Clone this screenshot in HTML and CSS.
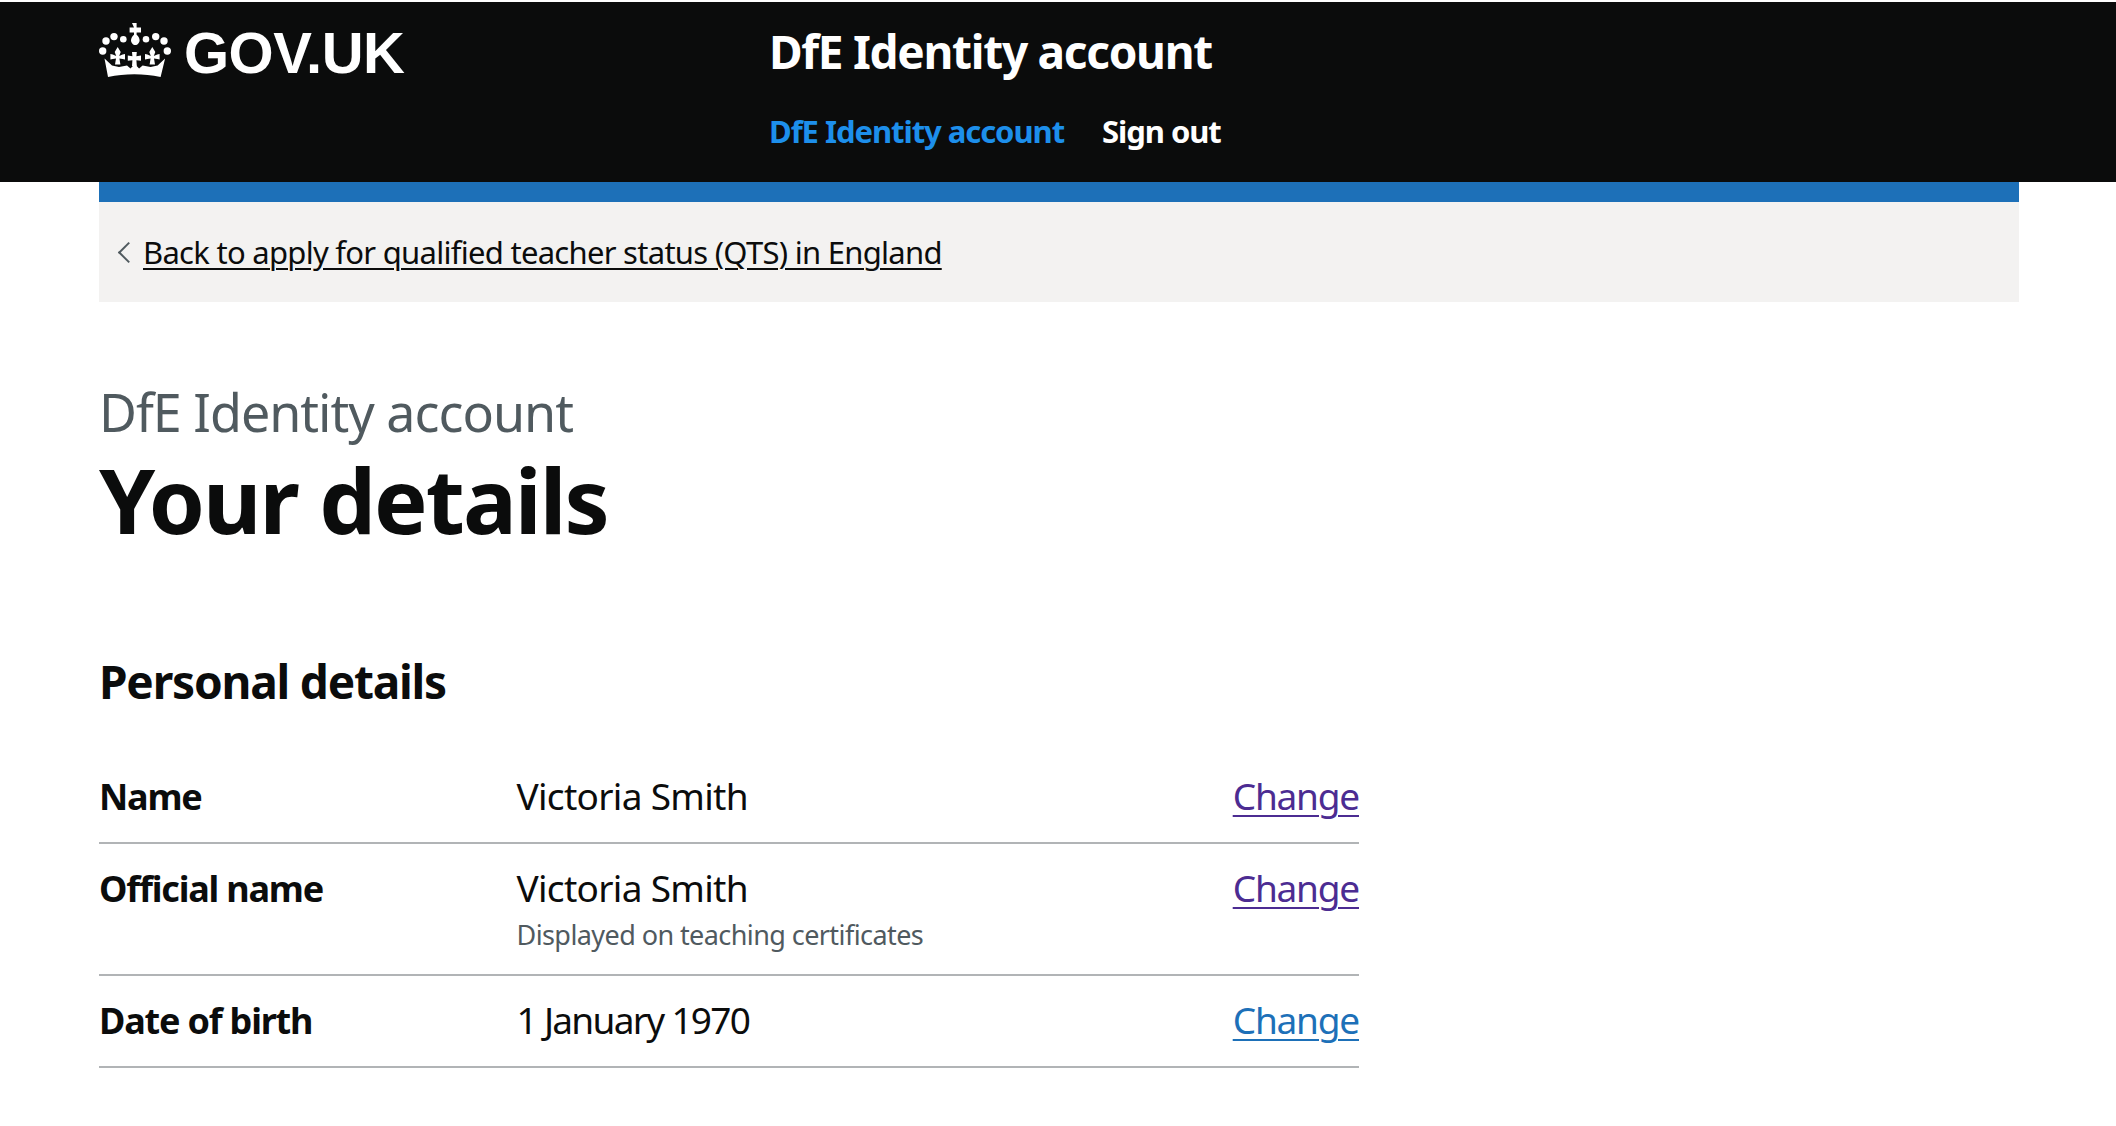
FILE: index.html

```html
<!DOCTYPE html>
<html lang="en">
<head>
    <meta charset="utf-8">
    <title>Your details - DfE Identity account</title>
    <link rel="stylesheet" href="styles.css">
</head>
<body>
    <header class="header">
        <div class="header-inner">
            <a class="logo" href="#">
                <svg class="crown" viewBox="0 0 72 54" aria-hidden="true">
                    <!-- top cross and orb -->
                    <path d="M33 0h4.600v4.600h4.400v4.800h-4.400v2.400c2 1.600 3 3.800 3 5.600 0 2-2 4.600-4.300 4.600s-4.300-2.600-4.300-4.600c0-1.800 1-4 3-5.600v-2.400h-4.400v-4.800h4.400z"/>
                    <circle cx="7" cy="18" r="3.700"/>
                    <circle cx="15" cy="13.600" r="3.700"/>
                    <circle cx="24.300" cy="16.300" r="3.300"/>
                    <circle cx="47" cy="16.300" r="3.300"/>
                    <circle cx="56.700" cy="13.600" r="3.700"/>
                    <circle cx="65" cy="18" r="3.700"/>
                    <circle cx="3.700" cy="28" r="3.700"/>
                    <circle cx="68.300" cy="28" r="3.700"/>
                    <!-- middle cross -->
                    <path d="M33 29h4.800l-.4 4.200 4.600-.6v5.200l-4.600-.6.4 5.800h-4.800l.4-5.800-4.600.6v-5.200l4.600.6z"/>
                    <!-- side fleurs -->
                    <path d="M18.700 24l3 5-1.500 4 3.400-1.400 2.400-.6v5.500l-2.400-.4-3.200-.6 1 6h-5.400l1-6-3.200.6-2.400.4v-5.500l2.400.6 3.400 1.400-1.500-4z"/>
                    <path d="M53.300 24l3 5-1.500 4 3.400-1.400 2.400-.6v5.500l-2.400-.4-3.200-.6 1 6h-5.400l1-6-3.200.6-2.400.4v-5.500l2.400.6 3.400 1.400-1.500-4z"/>
                    <!-- band -->
                    <path d="M5.500 35.500l7.500 7 7 1.500 8-1.500 3.500 3 4.300-4.500 4.300 4.500 3.500-3 8 1.500 7-1.500 7.500-7-4.500 18.500c-9-2-17-2.800-26.300-2.800s-17.300.8-26.300 2.800z"/>
                </svg>
                <span class="logo-text">GOV.UK</span>
            </a>
            <div class="service">
                <a class="service-name" href="#">DfE Identity account</a>
                <nav class="service-nav">
                    <a class="nav-active" href="#">DfE Identity account</a>
                    <a href="#">Sign out</a>
                </nav>
            </div>
        </div>
    </header>

    <div class="width-container">
        <div class="back-bar">
            <span class="chevron"></span>
            <a href="#">Back to apply for qualified teacher status (QTS) in England</a>
        </div>

        <main class="main">
            <span class="caption">DfE Identity account</span>
            <h1>Your details</h1>

            <h2>Personal details</h2>
            <dl class="summary">
                <div class="summary-row">
                    <dt>Name</dt>
                    <dd>Victoria Smith</dd>
                    <dd class="summary-action"><a class="visited" href="#">Change</a></dd>
                </div>
                <div class="summary-row">
                    <dt>Official name</dt>
                    <dd>
                        Victoria Smith
                        <p class="hint">Displayed on teaching certificates</p>
                    </dd>
                    <dd class="summary-action"><a class="visited" href="#">Change</a></dd>
                </div>
                <div class="summary-row">
                    <dt>Date of birth</dt>
                    <dd class="summary-date">1 January 1970</dd>
                    <dd class="summary-action"><a href="#">Change</a></dd>
                </div>
            </dl>
        </main>
    </div>
</body>
</html>
```

FILE: styles.css

```css
html, body {
    margin: 0;
    background: #ffffff;
}

body {
    font-family: "Noto Sans", Arial, sans-serif;
    color: #0b0c0c;
    overflow: hidden;
}

a {
    color: inherit;
}

.header {
    margin-top: 2px;
    height: 180px;
    background: #0b0c0c;
}

.header-inner {
    display: flex;
    padding-left: 99px;
}

.logo {
    display: flex;
    align-items: flex-start;
    width: 670px;
    padding-top: 21px;
    color: #ffffff;
    text-decoration: none;
}

.crown {
    width: 72px;
    height: 54px;
    fill: #ffffff;
}

.logo-text {
    margin-left: 13px;
    font-family: "Liberation Sans", Arial, sans-serif;
    font-size: 58px;
    line-height: 60px;
    font-weight: 700;
    letter-spacing: -0.5px;
}

.service {
    padding-top: 20px;
}

.service-name {
    display: block;
    font-size: 46px;
    line-height: 58px;
    font-weight: 700;
    letter-spacing: -1.3px;
    color: #ffffff;
    text-decoration: none;
}

.service-nav {
    display: flex;
    gap: 38px;
    margin-top: 31px;
    font-size: 31px;
    line-height: 40px;
    font-weight: 700;
    letter-spacing: -1.05px;
}

.service-nav a {
    color: #ffffff;
    text-decoration: none;
}

.service-nav .nav-active {
    color: #1d8feb;
}

.width-container {
    width: 1920px;
    margin-left: 99px;
}

.back-bar {
    display: flex;
    align-items: center;
    height: 100px;
    border-top: 20px solid #1d70b8;
    background: #f3f2f1;
    padding-left: 22px;
    font-size: 31px;
    letter-spacing: -0.72px;
}

.back-bar a {
    text-decoration-thickness: 2px;
    text-underline-offset: 4px;
}

.chevron {
    width: 13px;
    height: 13px;
    margin-right: 7px;
    border-left: 2px solid #505a5f;
    border-bottom: 2px solid #505a5f;
    transform: rotate(45deg);
}

.main {
    padding-top: 78px;
}

.caption {
    display: block;
    font-size: 52px;
    line-height: 64px;
    color: #505a5f;
    letter-spacing: -1px;
}

h1 {
    margin: 3px 0 0;
    font-size: 90px;
    line-height: 104px;
    font-weight: 700;
    letter-spacing: -2px;
}

h2 {
    margin: 100px 0 0;
    font-size: 46px;
    line-height: 60px;
    font-weight: 700;
    letter-spacing: -1.2px;
}

.summary {
    width: 1260px;
    margin: 41px 0 0;
    font-size: 37px;
    line-height: 50px;
}

.summary-row {
    display: grid;
    grid-template-columns: 417.500px 1fr auto;
    padding: 20px 0;
    border-bottom: 2px solid #b1b4b6;
}

.summary dt {
    font-size: 36px;
    font-weight: 700;
    letter-spacing: -1.2px;
}

.summary dd {
    margin: 0;
    line-height: 48px;
    letter-spacing: -0.7px;
}

.summary .summary-date {
    letter-spacing: -1.7px;
}

.summary .summary-action {
    letter-spacing: -1.2px;
}

.summary-action a {
    color: #1d70b8;
    text-decoration-thickness: 2px;
    text-underline-offset: 5px;
}

.summary-action a.visited {
    color: #4c2c92;
}

.hint {
    margin: 5px 0 1px;
    font-size: 27px;
    line-height: 36px;
    color: #505a5f;
    letter-spacing: -0.58px;
}
```
